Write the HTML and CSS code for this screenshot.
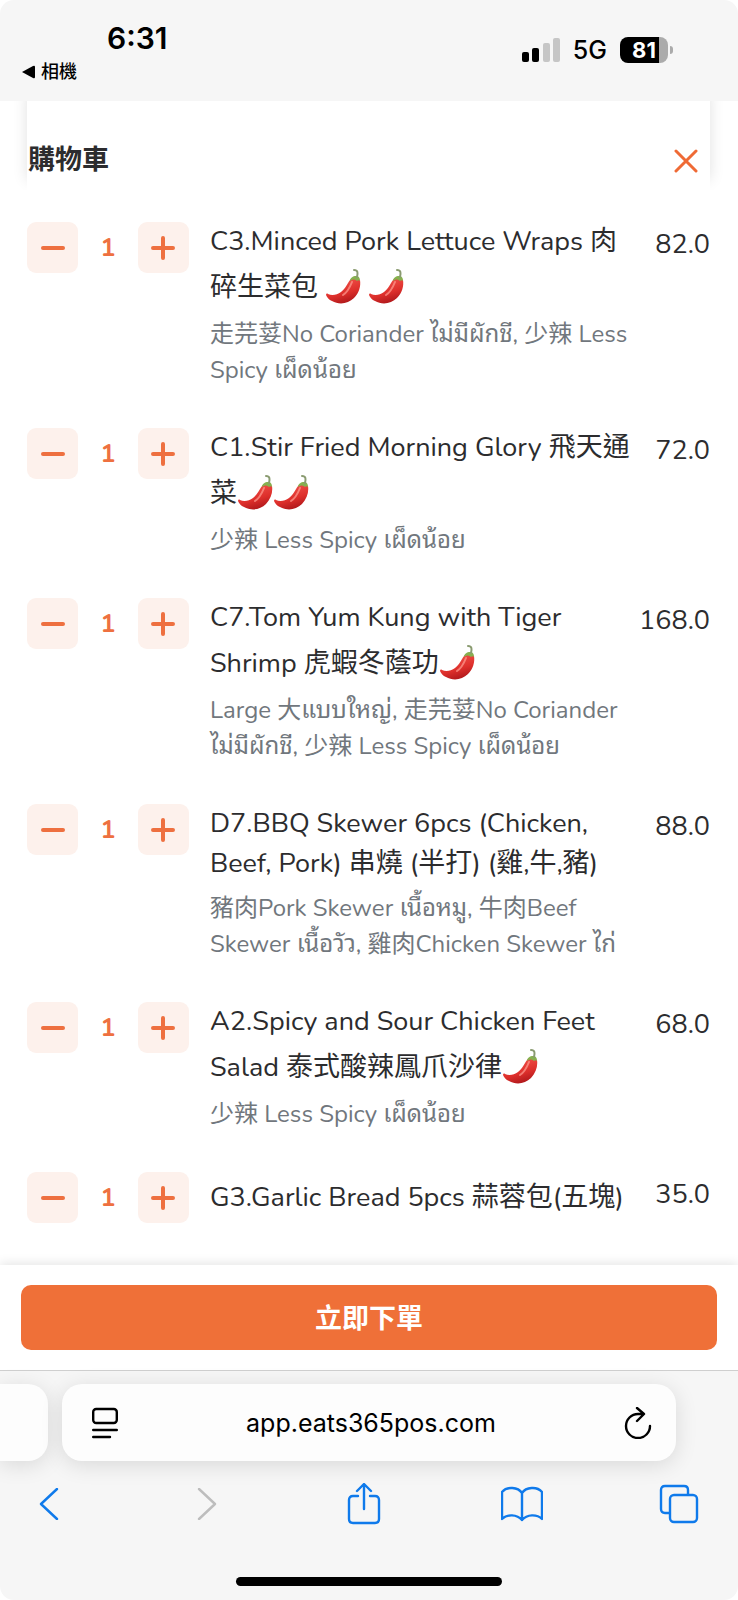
FILE: index.html
```html
<!DOCTYPE html>
<html lang="zh-Hant">
<head>
    <meta charset="UTF-8">
    <meta name="viewport" content="width=device-width, initial-scale=1.0">
    <title>購物車</title>
    <link rel="stylesheet" href="styles.css">
</head>
<body>

    <!-- shared icons -->
    <svg class="icon-defs" aria-hidden="true">
        <defs>
            <linearGradient id="chilli-red" x1="0.3" y1="0" x2="0.7" y2="1">
                <stop offset="0" stop-color="#f4574f"/>
                <stop offset="0.6" stop-color="#dd2f2b"/>
                <stop offset="1" stop-color="#a91519"/>
            </linearGradient>
        </defs>
        <symbol id="chilli" viewBox="0 0 36 36">
            <path d="M25 12c2-3 7-3 10 0c1 6-1 13-6 18c-6 6-15 7-22 3c-3-1-5-4-6-6c0-1 1-2 2-1c4 2 9 1 13-2c5-4 6-8 9-12z" fill="url(#chilli-red)"/>
            <path d="M27 14c-2 5-4 10-9 13" fill="none" stroke="#ff9c92" stroke-width="2" stroke-linecap="round" opacity="0.7"/>
            <path d="M25 13c0-3 3-5 6-5c3 0 4 2 4 5c-1-1-2-1-3 0c-2-2-4-2-7 0z" fill="#86b04f"/>
            <path d="M32 9c1-4 1-7-3-7" fill="none" stroke="#8a9b70" stroke-width="2" stroke-linecap="round"/>
        </symbol>
        <symbol id="minus" viewBox="0 0 24 24">
            <path d="M2 12h20" stroke="currentColor" stroke-width="4" stroke-linecap="round"/>
        </symbol>
        <symbol id="plus" viewBox="0 0 24 24">
            <path d="M2 12h20M12 2v20" stroke="currentColor" stroke-width="4" stroke-linecap="round"/>
        </symbol>
    </svg>

    <div class="screen">

        <div class="status-bar">
            <div class="status-left">
                <span class="clock">6:31</span>
                <a class="back-app" href="#">
                    <svg width="14" height="14" viewBox="0 0 14 14"><path d="M0 7L11 1q2-1 2 1v10q0 2-2 1z"/></svg>
                    相機
                </a>
            </div>
            <div class="status-right">
                <svg class="signal" width="38" height="24" viewBox="0 0 38 24">
                    <rect x="0" y="14" width="7" height="10" rx="2"/>
                    <rect x="10" y="10" width="7" height="14" rx="2"/>
                    <rect x="21" y="5" width="7" height="19" rx="2" fill="#c6c6c6"/>
                    <rect x="31" y="0" width="7" height="24" rx="2" fill="#c6c6c6"/>
                </svg>
                <span class="network">5G</span>
                <span class="battery">81</span>
            </div>
        </div>

        <header class="cart-header">
            <h1>購物車</h1>
            <button class="close-btn" aria-label="關閉">
                <svg width="24" height="24" viewBox="0 0 24 24"><path d="M2 2l20 20M22 2L2 22" fill="none" stroke="currentColor" stroke-width="3" stroke-linecap="round"/></svg>
            </button>
        </header>

        <main class="cart-list">
            <article class="cart-item">
                <div class="qty">
                    <button aria-label="減少"><svg><use href="#minus"/></svg></button>
                    <span>1</span>
                    <button aria-label="增加"><svg><use href="#plus"/></svg></button>
                </div>
                <div class="info">
                    <h2>C3.Minced Pork Lettuce Wraps 肉<br>碎生菜包 <svg class="chilli"><use href="#chilli"/></svg> <svg class="chilli"><use href="#chilli"/></svg></h2>
                    <p>走芫荽No Coriander ไม่มีผักชี, 少辣 Less<br>Spicy เผ็ดน้อย</p>
                </div>
                <span class="price">82.0</span>
            </article>

            <article class="cart-item">
                <div class="qty">
                    <button aria-label="減少"><svg><use href="#minus"/></svg></button>
                    <span>1</span>
                    <button aria-label="增加"><svg><use href="#plus"/></svg></button>
                </div>
                <div class="info">
                    <h2>C1.Stir Fried Morning Glory 飛天通<br>菜<svg class="chilli"><use href="#chilli"/></svg><svg class="chilli"><use href="#chilli"/></svg></h2>
                    <p>少辣 Less Spicy เผ็ดน้อย</p>
                </div>
                <span class="price">72.0</span>
            </article>

            <article class="cart-item">
                <div class="qty">
                    <button aria-label="減少"><svg><use href="#minus"/></svg></button>
                    <span>1</span>
                    <button aria-label="增加"><svg><use href="#plus"/></svg></button>
                </div>
                <div class="info">
                    <h2>C7.Tom Yum Kung with Tiger<br>Shrimp 虎蝦冬蔭功<svg class="chilli"><use href="#chilli"/></svg></h2>
                    <p>Large 大แบบใหญ่, 走芫荽No Coriander<br>ไม่มีผักชี, 少辣 Less Spicy เผ็ดน้อย</p>
                </div>
                <span class="price">168.0</span>
            </article>

            <article class="cart-item">
                <div class="qty">
                    <button aria-label="減少"><svg><use href="#minus"/></svg></button>
                    <span>1</span>
                    <button aria-label="增加"><svg><use href="#plus"/></svg></button>
                </div>
                <div class="info">
                    <h2>D7.BBQ Skewer 6pcs (Chicken,<br>Beef, Pork) 串燒 (半打) (雞,牛,豬)</h2>
                    <p>豬肉Pork Skewer เนื้อหมู, 牛肉Beef<br>Skewer เนื้อวัว, 雞肉Chicken Skewer ไก่</p>
                </div>
                <span class="price">88.0</span>
            </article>

            <article class="cart-item">
                <div class="qty">
                    <button aria-label="減少"><svg><use href="#minus"/></svg></button>
                    <span>1</span>
                    <button aria-label="增加"><svg><use href="#plus"/></svg></button>
                </div>
                <div class="info">
                    <h2>A2.Spicy and Sour Chicken Feet<br>Salad 泰式酸辣鳳爪沙律<svg class="chilli"><use href="#chilli"/></svg></h2>
                    <p>少辣 Less Spicy เผ็ดน้อย</p>
                </div>
                <span class="price">68.0</span>
            </article>

            <article class="cart-item">
                <div class="qty">
                    <button aria-label="減少"><svg><use href="#minus"/></svg></button>
                    <span>1</span>
                    <button aria-label="增加"><svg><use href="#plus"/></svg></button>
                </div>
                <div class="info">
                    <h2>G3.Garlic Bread 5pcs 蒜蓉包(五塊)</h2>
                </div>
                <span class="price">35.0</span>
            </article>
        </main>

        <footer class="checkout">
            <button class="order-btn">立即下單</button>
        </footer>

        <div class="browser-bar">
            <div class="tabs">
                <div class="prev-tab"></div>
                <div class="address">
                    <button aria-label="網頁選項">
                        <svg width="26" height="32" viewBox="0 0 26 32" fill="none" stroke="currentColor" stroke-width="2.4" stroke-linecap="round"><rect x="1.2" y="2" width="23.6" height="14" rx="3"/><path d="M1.2 23h23.6M1.2 30h16.8"/></svg>
                    </button>
                    <a href="#">app.eats365pos.com</a>
                    <button aria-label="重新載入">
                        <svg width="28" height="32" viewBox="0 0 28 32" fill="none" stroke="currentColor" stroke-width="2.4" stroke-linecap="round" stroke-linejoin="round"><path d="M26 19A12 12 0 1 1 14 7h5M13 1l7 6l-7 7"/></svg>
                    </button>
                </div>
            </div>
            <nav class="toolbar">
                <button aria-label="返回"><svg width="20" height="32" viewBox="0 0 20 32"><path d="M18 1L2 16l16 15"/></svg></button>
                <button aria-label="前進" disabled><svg width="20" height="32" viewBox="0 0 20 32"><path d="M2 1l16 15L2 31"/></svg></button>
                <button aria-label="分享"><svg width="34" height="42" viewBox="0 0 34 42"><path d="M11 13H6q-4 0-4 4v19q0 4 4 4h22q4 0 4-4V17q0-4-4-4h-5M17 26V2M10 8l7-7l7 7"/></svg></button>
                <button aria-label="書籤"><svg width="42" height="36" viewBox="0 0 42 36"><path d="M21 7C17 1 6 0 1 6v27c5-5 15-5 20 1c5-6 15-6 20-1V6C36 0 25 1 21 7zv27"/></svg></button>
                <button aria-label="分頁"><svg width="40" height="40" viewBox="0 0 40 40"><rect x="11" y="11" width="27" height="27" rx="4"/><path d="M10 29H6q-4 0-4-4V6q0-4 4-4h19q4 0 4 4v4"/></svg></button>
            </nav>
            <div class="home-indicator"></div>
        </div>

    </div>

</body>
</html>
```
FILE: styles.css
```css
* {
    box-sizing: border-box;
}

body {
    margin: 0;
    background-color: #fff;
    color: #2c2c2e;
    font-family: Nunito, Lato, "Noto Sans CJK TC", "Noto Sans Thai Looped", Loma, "Noto Sans Thai", "Noto Sans", sans-serif;
}

h1, h2, p {
    margin: 0;
    font-weight: 400;
}

button {
    margin: 0;
    padding: 0;
    border: none;
    background: none;
    color: inherit;
    font-family: inherit;
    cursor: pointer;
}

a {
    color: inherit;
    text-decoration: none;
}

svg {
    display: block;
}

.icon-defs {
    position: absolute;
    width: 0;
    height: 0;
}

.screen {
    display: flex;
    flex-direction: column;
    min-height: 100vh;
    overflow: hidden;
    border-radius: 14px;
}

/* Status bar */
.status-bar {
    display: flex;
    justify-content: space-between;
    height: 101px;
    padding: 18px 70px 0 22px;
    background-color: #f6f6f6;
    color: #000;
    font-family: Inter, "Noto Sans CJK TC", sans-serif;
}

.status-left {
    display: flex;
    flex-direction: column;
}

.clock {
    padding-left: 85px;
    font-size: 30px;
    font-weight: 600;
    line-height: 40px;
}

.back-app {
    display: flex;
    align-items: center;
    gap: 5px;
    font-size: 18px;
    font-weight: 500;
    line-height: 28px;
}

.status-right {
    display: flex;
    align-items: center;
    height: 64px;
    gap: 13px;
}

.network {
    font-size: 25px;
    font-weight: 500;
}

.battery {
    position: relative;
    width: 48px;
    height: 26px;
    border-radius: 8px;
    background: linear-gradient(90deg, #000 82%, #ababab 82%);
    color: #fff;
    font-size: 22px;
    font-weight: 700;
    line-height: 26px;
    text-align: center;
}

.battery::after {
    content: "";
    position: absolute;
    top: 9px;
    right: -5px;
    width: 3px;
    height: 8px;
    border-radius: 0 4px 4px 0;
    background-color: #ababab;
}

/* Cart */
.cart-header {
    display: flex;
    align-items: center;
    justify-content: space-between;
    height: 89px;
    margin: 0 28px 0 27px;
    padding: 30px 12px 0 1px;
    box-shadow: 0 -10px 14px rgba(0, 0, 0, 0.12);
    clip-path: inset(0 -20px 0 -20px);
}

.cart-header h1 {
    font-size: 27px;
    font-weight: 700;
    line-height: 40px;
}

.close-btn {
    color: #ef6a35;
}

.cart-list {
    flex: 1;
    display: flex;
    flex-direction: column;
    gap: 40px;
    padding: 32px 28px 40px 27px;
}

.cart-item {
    display: flex;
    align-items: flex-start;
}

.qty {
    display: flex;
    align-items: center;
    justify-content: space-between;
    width: 162px;
    margin-right: 21px;
    color: #ee7040;
    font-size: 25px;
    font-weight: 700;
}

.qty button {
    display: flex;
    align-items: center;
    justify-content: center;
    width: 51px;
    height: 51px;
    border-radius: 9px;
    background-color: #fdf1ec;
}

.qty svg {
    width: 24px;
    height: 24px;
}

.info {
    flex: 1;
    display: flex;
    flex-direction: column;
    justify-content: center;
    gap: 6px;
    min-height: 51px;
    white-space: nowrap;
}

.info h2 {
    font-size: 27px;
    line-height: 40px;
}

.info p {
    color: #71777d;
    font-size: 24px;
    line-height: 36px;
}

.chilli {
    display: inline-block;
    width: 36px;
    height: 48px;
    vertical-align: -14px;
}

.price {
    font-size: 27px;
    line-height: 46px;
}

/* Checkout */
.checkout {
    padding: 20px 21px;
    background-color: #fff;
    box-shadow: 0 -2px 10px rgba(0, 0, 0, 0.1);
}

.order-btn {
    width: 100%;
    height: 65px;
    border-radius: 10px;
    background-color: #ef7038;
    color: #fff;
    font-size: 27px;
    font-weight: 700;
}

/* Browser bar */
.browser-bar {
    border-top: 1px solid #cfcfcf;
    padding-bottom: 14px;
    background-color: #f6f6f6;
    font-family: Inter, sans-serif;
}

.tabs {
    display: flex;
    gap: 14px;
    padding: 13px 62px 0 0;
}

.prev-tab,
.address {
    height: 77px;
    background-color: #fdfdfd;
    box-shadow: 0 4px 22px rgba(0, 0, 0, 0.12);
}

.prev-tab {
    width: 48px;
    border-radius: 0 20px 20px 0;
}

.address {
    flex: 1;
    display: flex;
    align-items: center;
    justify-content: space-between;
    padding: 0 24px 0 30px;
    border-radius: 20px;
    color: #000;
    font-size: 25px;
}

.toolbar {
    display: flex;
    align-items: center;
    justify-content: space-between;
    height: 86px;
    padding: 0 38px 0 28px;
    color: #0f7aeb;
}

.toolbar button {
    display: flex;
    justify-content: center;
    width: 42px;
}

.toolbar svg {
    fill: none;
    stroke: currentColor;
    stroke-width: 2.4;
    stroke-linecap: round;
    stroke-linejoin: round;
}

.toolbar button:disabled {
    color: #bdbdbd;
}

.home-indicator {
    width: 36%;
    height: 9px;
    margin: 30px auto 0;
    border-radius: 5px;
    background-color: #000;
}
```
